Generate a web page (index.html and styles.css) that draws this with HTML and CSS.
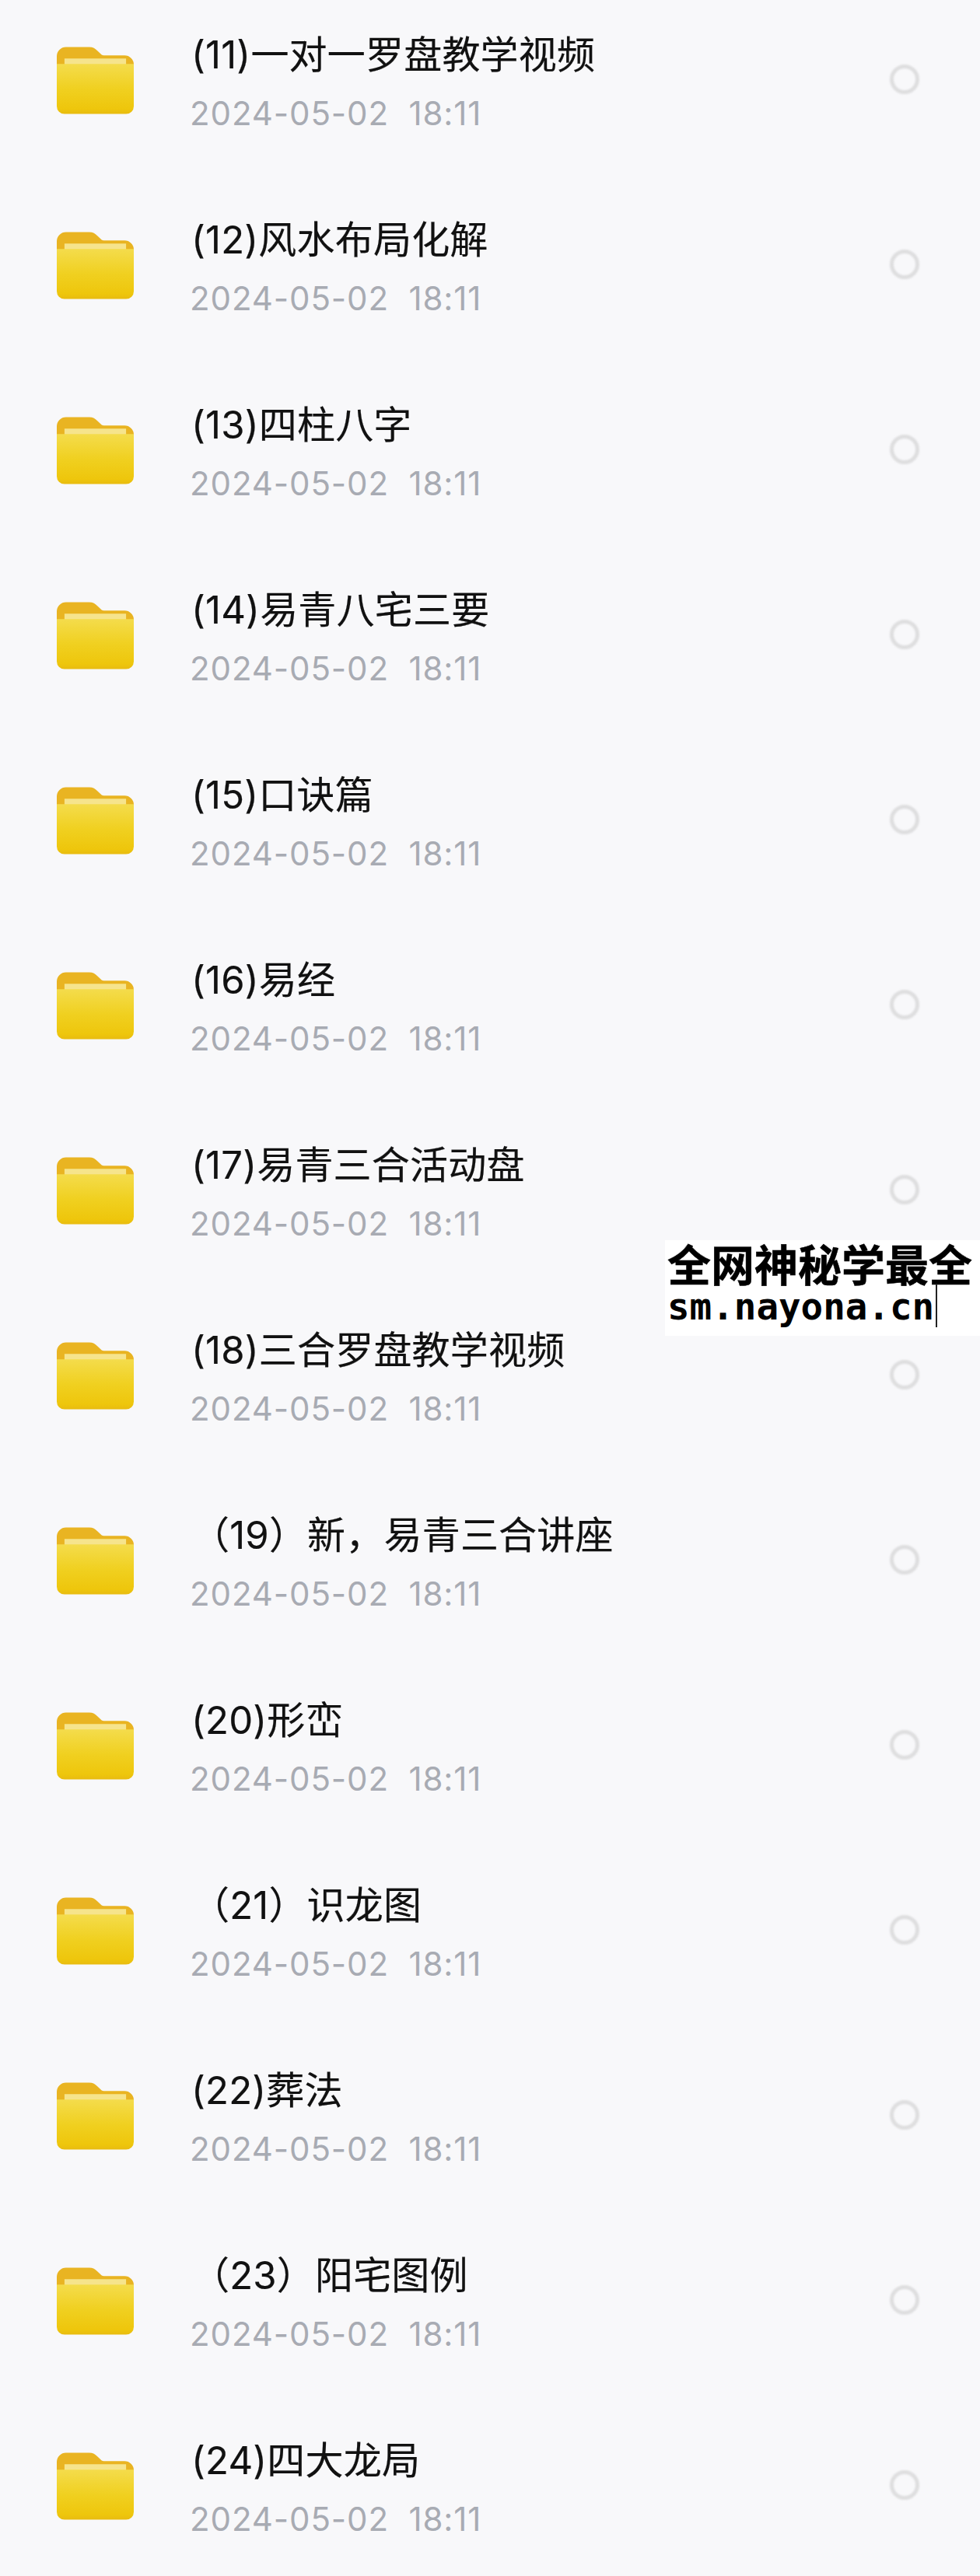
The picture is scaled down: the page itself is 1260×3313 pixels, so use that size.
FILE: index.html
```html
<!DOCTYPE html>
<html lang="zh-CN">
<head>
<meta charset="utf-8">
<title>文件列表</title>
<link rel="stylesheet" href="styles.css">
</head>
<body>
<svg class="defs" width="0" height="0" aria-hidden="true">
  <defs>
    <linearGradient id="front" x1="0" y1="0" x2="0" y2="1">
      <stop offset="0" stop-color="#f4dc4c"/>
      <stop offset="0.5" stop-color="#f0d020"/>
      <stop offset="0.9" stop-color="#eec60c"/>
      <stop offset="1" stop-color="#e8bb10"/>
    </linearGradient>
    <symbol id="folder" viewBox="0 0 100 90">
      <path d="M0 13a12 12 0 0 1 12-12h30c5 0 8 2 11 5l4 4c2 2 3 2 6 2h25a12 12 0 0 1 12 12v20H0z" fill="#e9b422"/>
      <path d="M10 16h80v10H10z" fill="#f6e48c"/>
      <path d="M0 23h100v55a10 10 0 0 1-10 10H10A10 10 0 0 1 0 78z" fill="url(#front)"/>
    </symbol>
  </defs>
</svg>
<main class="list">
  <div class="row"><svg class="folder"><use href="#folder"/></svg><div class="info"><div class="name">(11)一对一罗盘教学视频</div><div class="date">2024-05-02&nbsp;&nbsp;18:11</div></div><span class="check"></span></div>
  <div class="row"><svg class="folder"><use href="#folder"/></svg><div class="info"><div class="name">(12)风水布局化解</div><div class="date">2024-05-02&nbsp;&nbsp;18:11</div></div><span class="check"></span></div>
  <div class="row"><svg class="folder"><use href="#folder"/></svg><div class="info"><div class="name">(13)四柱八字</div><div class="date">2024-05-02&nbsp;&nbsp;18:11</div></div><span class="check"></span></div>
  <div class="row"><svg class="folder"><use href="#folder"/></svg><div class="info"><div class="name">(14)易青八宅三要</div><div class="date">2024-05-02&nbsp;&nbsp;18:11</div></div><span class="check"></span></div>
  <div class="row"><svg class="folder"><use href="#folder"/></svg><div class="info"><div class="name">(15)口诀篇</div><div class="date">2024-05-02&nbsp;&nbsp;18:11</div></div><span class="check"></span></div>
  <div class="row"><svg class="folder"><use href="#folder"/></svg><div class="info"><div class="name">(16)易经</div><div class="date">2024-05-02&nbsp;&nbsp;18:11</div></div><span class="check"></span></div>
  <div class="row"><svg class="folder"><use href="#folder"/></svg><div class="info"><div class="name">(17)易青三合活动盘</div><div class="date">2024-05-02&nbsp;&nbsp;18:11</div></div><span class="check"></span></div>
  <div class="row"><svg class="folder"><use href="#folder"/></svg><div class="info"><div class="name">(18)三合罗盘教学视频</div><div class="date">2024-05-02&nbsp;&nbsp;18:11</div></div><span class="check"></span></div>
  <div class="row"><svg class="folder"><use href="#folder"/></svg><div class="info"><div class="name">（19）新，易青三合讲座</div><div class="date">2024-05-02&nbsp;&nbsp;18:11</div></div><span class="check"></span></div>
  <div class="row"><svg class="folder"><use href="#folder"/></svg><div class="info"><div class="name">(20)形峦</div><div class="date">2024-05-02&nbsp;&nbsp;18:11</div></div><span class="check"></span></div>
  <div class="row"><svg class="folder"><use href="#folder"/></svg><div class="info"><div class="name">（21）识龙图</div><div class="date">2024-05-02&nbsp;&nbsp;18:11</div></div><span class="check"></span></div>
  <div class="row"><svg class="folder"><use href="#folder"/></svg><div class="info"><div class="name">(22)葬法</div><div class="date">2024-05-02&nbsp;&nbsp;18:11</div></div><span class="check"></span></div>
  <div class="row"><svg class="folder"><use href="#folder"/></svg><div class="info"><div class="name">（23）阳宅图例</div><div class="date">2024-05-02&nbsp;&nbsp;18:11</div></div><span class="check"></span></div>
  <div class="row"><svg class="folder"><use href="#folder"/></svg><div class="info"><div class="name">(24)四大龙局</div><div class="date">2024-05-02&nbsp;&nbsp;18:11</div></div><span class="check"></span></div>
</main>
<aside class="stamp">
  <div class="stamp-title">全网神秘学最全</div>
  <div class="stamp-url">sm.nayona.cn</div>
  <span class="caret"></span>
</aside>
</body>
</html>
```
FILE: styles.css
```css
html, body {
  margin: 0;
  padding: 0;
  height: 3313px;
  overflow: hidden;
  background: #f8f8fa;
}

body {
  position: relative;
  font-family: Inter, "Noto Sans CJK SC", sans-serif;
}

.defs {
  display: block;
}

.list {
  display: flex;
  flex-direction: column;
  margin-top: -17px;
}

.row {
  display: flex;
  align-items: center;
  height: 238px;
  padding: 0 78px 0 73px;
  flex: none;
}

.folder {
  width: 99px;
  height: 90px;
  flex: none;
  margin-top: 4px;
  filter: blur(0.5px);
}

.info {
  flex: 1;
  margin-left: 74px;
  margin-top: 6px;
  display: flex;
  flex-direction: column;
  gap: 19px;
}

.name {
  font-size: 49px;
  line-height: 62px;
  letter-spacing: 0.2px;
  color: #111;
  -webkit-text-stroke: 0.2px #111;
}

.date {
  margin-left: -2px;
  font-size: 42px;
  line-height: 50px;
  letter-spacing: 0.9px;
  color: #a8abb3;
}

.check {
  width: 28px;
  height: 28px;
  border: 5px solid #dededf;
  border-radius: 50%;
  flex: none;
  filter: blur(0.8px);
}

.stamp {
  position: absolute;
  left: 855px;
  top: 1595px;
  width: 405px;
  height: 123px;
  background: #fff;
  color: #000;
  box-sizing: border-box;
  padding-left: 3px;
}

.stamp-title {
  font-family: "Noto Sans CJK SC", sans-serif;
  font-weight: 700;
  font-size: 56px;
  line-height: 58px;
  white-space: nowrap;
  -webkit-text-stroke: 0.5px #000;
}

.stamp-url {
  font-family: "DejaVu Sans Mono", monospace;
  font-weight: 700;
  font-size: 47.5px;
  line-height: 56px;
  white-space: nowrap;
}

.caret {
  position: absolute;
  left: 348px;
  top: 56px;
  width: 1.5px;
  height: 56px;
  background: #222;
}
```
